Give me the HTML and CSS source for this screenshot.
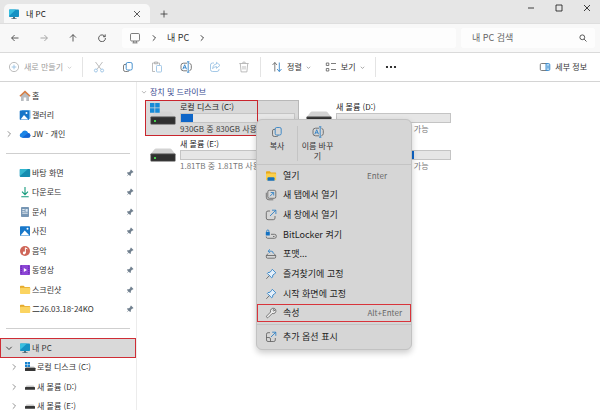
FILE: index.html
```html
<!DOCTYPE html>
<html lang="ko">
<head>
    <meta charset="UTF-8">
    <title>내 PC</title>
    <link rel="stylesheet" href="styles.css">
</head>
<body>
<!-- shared icons -->
<svg class="sprite" aria-hidden="true">
    <symbol id="i-pc" viewBox="0 0 12 12">
        <rect x="1" y="1.5" width="10" height="7.5" rx=".8" fill="#1592c4"/>
        <path d="M1 8V2.3q0-.8.8-.8H8z" fill="#38bfe0"/>
        <path d="M5 9h2v1.2h1.6v.8H3.400v-.8H5z" fill="#55707c"/>
    </symbol>
    <symbol id="i-right" viewBox="0 0 8 8"><path d="M2.800 1.300 5.500 4 2.800 6.700" class="line"/></symbol>
    <symbol id="i-down" viewBox="0 0 8 8"><path d="M1.300 2.800 4 5.500 6.700 2.800" class="line"/></symbol>
    <symbol id="i-x" viewBox="0 0 8 8"><path d="M1 1l6 6M7 1 1 7" class="line"/></symbol>
    <symbol id="i-copy" viewBox="0 0 12 12">
        <path d="M4 3.400H3q-1.500 0-1.500 1.500v3.800q0 1.800 1.800 1.800h2.400q1.300 0 1.500-1.200" class="line"/>
        <rect x="4.200" y="1.500" width="6" height="7.500" rx="1.500" class="line blue"/>
    </symbol>
    <symbol id="i-rename" viewBox="0 0 12 12">
        <path d="M7 2.200H3.500Q1 2.200 1 4.500v3Q1 9.800 3.500 9.800H7M9.400 2.300q1.900.4 1.900 2.200v3q0 1.800-1.900 2.200" class="line"/>
        <path d="M7 .8h2.400M7 11.200h2.400M8.200.8v10.400M2.800 8.300 4.700 3.700l1.900 4.600M3.400 6.800h2.600" class="line blue"/>
    </symbol>
    <symbol id="i-pin" viewBox="0 0 8 8">
        <path d="M5 .6 7.500 3 6.700 3.700 6.200 3.600 4.900 5l-.1 1.500-.6.6L2.700 5.700.8 7.300.7 7.200 2.300 5.300.9 3.900l.6-.6L3 3.200 4.400 1.900 4.300 1.300z" fill="#71808f"/>
    </symbol>
    <symbol id="i-pushpin" viewBox="0 0 12 12">
        <path d="M7.300 1.300 10.800 4.800 9.700 5.600 7.900 7 7.500 9.200 6.700 9.800 2.300 5.400 3 4.600 5.100 4.200 6.600 2.400z" fill="#e3effa" class="line blue filled"/>
        <path d="M4.300 7.700 1.300 10.800" class="line"/>
    </symbol>
    <symbol id="i-folder" viewBox="0 0 12 12">
        <path d="M1 2.500q0-.7.7-.7h3l1.100 1.100h4.600q.7 0 .7.7V6H1z" fill="#e5aa2d"/>
        <rect x="1" y="3.700" width="10.200" height="6.300" rx=".7" fill="#fbd461"/>
    </symbol>
    <symbol id="i-gallery" viewBox="0 0 12 12">
        <rect x="2.500" y="1" width="9" height="9" rx="1" fill="#72baf0"/>
        <rect x=".7" y="1.500" width="9.500" height="9.500" rx="1" fill="#1675c8"/>
        <path d="M1.500 10.600 5 6l4.300 4.600z" fill="#fff"/><circle cx="7.500" cy="4" r="1" fill="#fff"/>
    </symbol>
    <symbol id="i-photo" viewBox="0 0 12 12">
        <rect x="1" y="1.200" width="10" height="9.800" rx=".8" fill="#1878ca"/>
        <path d="M1.500 10.600 5.700 5.500l4.800 5.100z" fill="#fff"/><circle cx="8.500" cy="3.800" r="1" fill="#fff"/>
    </symbol>
    <symbol id="i-drive-s" viewBox="0 0 12 12">
        <path d="M2.500 4.500h7l1.300 1.800H1.200z" fill="#c9c9c9"/><rect x="1" y="6" width="10" height="2.800" rx=".5" fill="#363636"/>
    </symbol>
    <symbol id="i-drive-c" viewBox="0 0 12 12">
        <path d="M3.500 5.500h6.300l1.200 1.500H1.200z" fill="#c9c9c9"/><rect x="1" y="6.800" width="10.500" height="3.200" rx=".5" fill="#363636"/>
        <path d="M1 1h2.300v2.300H1zM3.700 1H6v2.300H3.700zM1 3.700h2.300V6H1zM3.700 3.700H6V6H3.700z" fill="#1682cf"/>
    </symbol>
    <symbol id="i-drive" viewBox="0 0 26 14">
        <path d="M6 .5h14q1 0 1.500.8L25.300 6v2H.7V6l3.800-4.700Q5 .5 6 .5z" fill="#d3d3d3"/>
        <rect x=".5" y="5.500" width="25" height="8" rx=".8" fill="#4b4b4b"/>
        <rect x="1.200" y="6.500" width="23.600" height="6.200" fill="#303030"/>
        <rect x="4" y="9" width="2" height="2" fill="#45d04d"/>
    </symbol>
</svg>

<div class="window">
    <header class="tabbar">
        <div class="tab">
            <svg class="icon"><use href="#i-pc"/></svg>
            <span class="tab-title">내 PC</span>
            <button class="icon-btn" aria-label="탭 닫기"><svg class="small"><use href="#i-x"/></svg></button>
        </div>
        <button class="icon-btn new-tab" aria-label="새 탭"><svg class="small" viewBox="0 0 8 8"><path d="M4 .5v7M.5 4h7" class="line"/></svg></button>
        <div class="window-controls">
            <button class="icon-btn" aria-label="최소화"><svg class="small" viewBox="0 0 8 8"><path d="M1 4h6" class="line"/></svg></button>
            <button class="icon-btn" aria-label="최대화"><svg class="small" viewBox="0 0 8 8"><path d="M1 1h6v6H1z" class="line"/></svg></button>
            <button class="icon-btn" aria-label="닫기"><svg class="small"><use href="#i-x"/></svg></button>
        </div>
    </header>

    <nav class="navbar">
        <div class="nav-buttons">
            <button class="icon-btn" aria-label="뒤로"><svg class="small" viewBox="0 0 8 8"><path d="M7.500 4H.7M3.600 1 .6 4l3 3" class="line"/></svg></button>
            <button class="icon-btn" aria-label="앞으로" disabled><svg class="small" viewBox="0 0 8 8"><path d="M.5 4h6.800M4.400 1l3 3-3 3" class="line"/></svg></button>
            <button class="icon-btn" aria-label="위로"><svg class="small" viewBox="0 0 8 8"><path d="M4 7.500V.7M1 3.600l3-3 3 3" class="line"/></svg></button>
            <button class="icon-btn" aria-label="새로 고침"><svg class="small" viewBox="0 0 8 8"><path d="M6.900 2.500A3.400 3.400 0 1 0 7.400 4M7.200.4v2.300H5" class="line"/></svg></button>
        </div>
        <div class="address">
            <svg class="icon" viewBox="0 0 12 12"><rect x="1.500" y="1.500" width="9" height="7.500" rx="1.200" class="line"/><path d="M4.700 9v1.700M7.300 9v1.700M3.500 10.900h5" class="line"/></svg>
            <svg class="small dark"><use href="#i-right"/></svg>
            <a href="#">내 PC</a>
            <svg class="small dark"><use href="#i-right"/></svg>
        </div>
        <label class="search">
            <input type="text" placeholder="내 PC 검색" aria-label="내 PC 검색">
            <svg class="small" viewBox="0 0 8 8"><circle cx="3.300" cy="3.300" r="2.400" class="line"/><path d="M5.100 5.100 7.500 7.500" class="line"/></svg>
        </label>
    </nav>

    <div class="toolbar">
        <button class="tool" disabled>
            <svg class="icon" viewBox="0 0 12 12"><circle cx="6" cy="6" r="4.600" class="line"/><path d="M6 3.700v4.600M3.700 6h4.600" class="line blue"/></svg>
            새로 만들기
            <svg class="caret"><use href="#i-down"/></svg>
        </button>
        <div class="tool-group">
            <button class="icon-btn" aria-label="잘라내기" disabled><svg class="icon" viewBox="0 0 12 12"><path d="M2.500 1 8 8.300M9.500 1 4 8.300" class="line"/><circle cx="2.900" cy="9.500" r="1.500" class="line blue"/><circle cx="9.100" cy="9.500" r="1.500" class="line blue"/></svg></button>
            <button class="icon-btn" aria-label="복사"><svg class="icon"><use href="#i-copy"/></svg></button>
            <button class="icon-btn" aria-label="붙여넣기" disabled><svg class="icon" viewBox="0 0 12 12"><path d="M4 10.500H1.500v-8.500h7v2M3.500 1h3v1.800h-3z" class="line"/><rect x="5.500" y="4.500" width="5" height="6.500" rx=".8" class="line blue"/></svg></button>
            <button class="icon-btn" aria-label="이름 바꾸기"><svg class="icon"><use href="#i-rename"/></svg></button>
            <button class="icon-btn" aria-label="공유" disabled><svg class="icon" viewBox="0 0 12 12"><path d="M5 2H3.500Q1.500 2 1.500 4v4.500q0 2 2 2H8q2 0 2-2V8" class="line blue"/><path d="M7.500 1.300 11 4.300 7.500 7.300V5.600Q5 5.500 3.700 7.700 4 3.300 7.500 3z" class="line blue"/></svg></button>
            <button class="icon-btn" aria-label="삭제" disabled><svg class="icon" viewBox="0 0 12 12"><path d="M1.300 2.500h9.400M4.500 2.300Q4.500 1 6 1t1.500 1.300M2.300 2.700l.8 8.200h5.800l.8-8.200M5 5v3.500M7 5v3.500" class="line"/></svg></button>
        </div>
        <div class="tool-group menus">
            <button class="tool">
                <svg class="icon" viewBox="0 0 12 12"><path d="M3.800 10.500v-9M1.500 4l2.300-2.500L6 4" class="line"/><path d="M8.300 1.500v9M6 8l2.300 2.500L10.500 8" class="line blue"/></svg>
                정렬
                <svg class="caret"><use href="#i-down"/></svg>
            </button>
            <button class="tool">
                <svg class="icon" viewBox="0 0 12 12"><path d="M1.300 2h2.500v2.500H1.300zM1.300 7.500h2.500V10H1.300zM6 2.500h5M6 8.500h5" class="line"/></svg>
                보기
                <svg class="caret"><use href="#i-down"/></svg>
            </button>
        </div>
        <button class="icon-btn more" aria-label="자세히"><svg class="icon" viewBox="0 0 12 12"><circle cx="2" cy="6" r="1.100"/><circle cx="6" cy="6" r="1.100"/><circle cx="10" cy="6" r="1.100"/></svg></button>
        <button class="tool details">
            <svg class="icon" viewBox="0 0 12 12"><path d="M7 2.500H2.500Q1.300 2.500 1.300 3.700v4.600q0 1.200 1.200 1.200H7" class="line"/><path d="M7 2.500h2.500q1.300 0 1.300 1.200v4.600q0 1.200-1.300 1.200H7z" fill="#b9dcf5" class="line blue filled"/><path d="M9 4.500v3" class="line blue"/></svg>
            세부 정보
        </button>
    </div>

    <div class="body">
        <aside class="sidebar">
            <div class="side-group home">
                <a href="#" class="side-item"><svg class="icon" viewBox="0 0 12 12"><path d="M2 5.500 6 2l4 3.500V11H7.300V7.500H4.700V11H2z" fill="#b9bdc1"/><path d="M.9 6.200 6 1.600l5.100 4.600" fill="none" stroke="#d57d43" stroke-width="1.500"/></svg>홈</a>
                <a href="#" class="side-item"><svg class="icon"><use href="#i-gallery"/></svg>갤러리</a>
                <a href="#" class="side-item"><svg class="small"><use href="#i-right"/></svg><svg class="icon" viewBox="0 0 12 12"><path d="M3.200 9.700Q.7 9.600.7 7.200q0-2 2-2.500Q3.700 2.500 6 2.500q2.500 0 3.200 2.600 2.200.2 2.200 2.300 0 2.200-2.300 2.300z" fill="#1b85e6"/><path d="M3 9.700 9.200 5.100q2.200.2 2.200 2.300 0 2.200-2.300 2.300z" fill="#1263d2"/></svg>JW - 개인</a>
            </div>
            <hr>
            <div class="side-group quick">
                <a href="#" class="side-item"><svg class="icon" viewBox="0 0 12 12"><rect x=".8" y="2" width="10.400" height="8" rx=".8" fill="#148caf"/><path d="M.8 9V2.800q0-.8.8-.8H9z" fill="#32b6ce"/></svg>바탕 화면<svg class="pin"><use href="#i-pin"/></svg></a>
                <a href="#" class="side-item"><svg class="icon" viewBox="0 0 12 12"><path d="M6 1v7.500M3 5.700l3 3 3-3M2.300 10.700h7.400" fill="none" stroke="#159b7c" stroke-width="1.100"/></svg>다운로드<svg class="pin"><use href="#i-pin"/></svg></a>
                <a href="#" class="side-item"><svg class="icon" viewBox="0 0 12 12"><rect x="2" y="1" width="8" height="10" rx=".8" fill="#7796b4"/><path d="M3.300 3.500h2.400M3.300 5.300h2.400M3.300 7.200h5.400" stroke="#fff" stroke-width=".8"/><path d="M6.500 3h2.200v2.800H6.500z" fill="#d8e7f4"/></svg>문서<svg class="pin"><use href="#i-pin"/></svg></a>
                <a href="#" class="side-item"><svg class="icon"><use href="#i-photo"/></svg>사진<svg class="pin"><use href="#i-pin"/></svg></a>
                <a href="#" class="side-item"><svg class="icon" viewBox="0 0 12 12"><circle cx="6" cy="6" r="5" fill="#cf6658"/><path d="M6.400 8V2.800L8.500 4" fill="none" stroke="#fff"/><circle cx="5.200" cy="8" r="1.400" fill="#fff"/></svg>음악<svg class="pin"><use href="#i-pin"/></svg></a>
                <a href="#" class="side-item"><svg class="icon" viewBox="0 0 12 12"><rect x="1" y="1" width="10" height="10" rx=".8" fill="#8c45d5"/><path d="M2.200 1.500v9M9.800 1.500v9" stroke="#5b20a0" stroke-dasharray="1.200 1"/><path d="M4.800 4v4L8 6z" fill="#fff"/></svg>동영상<svg class="pin"><use href="#i-pin"/></svg></a>
                <a href="#" class="side-item"><svg class="icon"><use href="#i-folder"/></svg>스크린샷<svg class="pin"><use href="#i-pin"/></svg></a>
                <a href="#" class="side-item"><svg class="icon"><use href="#i-folder"/></svg>二26.03.18-24KO<svg class="pin"><use href="#i-pin"/></svg></a>
            </div>
            <hr>
            <div class="side-group tree">
                <a href="#" class="side-item current"><svg class="small"><use href="#i-down"/></svg><svg class="icon"><use href="#i-pc"/></svg>내 PC</a>
                <a href="#" class="side-item child"><svg class="small"><use href="#i-right"/></svg><svg class="icon"><use href="#i-drive-c"/></svg>로컬 디스크 (C:)</a>
                <a href="#" class="side-item child"><svg class="small"><use href="#i-right"/></svg><svg class="icon"><use href="#i-drive-s"/></svg>새 볼륨 (D:)</a>
                <a href="#" class="side-item child"><svg class="small"><use href="#i-right"/></svg><svg class="icon"><use href="#i-drive-s"/></svg>새 볼륨 (E:)</a>
            </div>
        </aside>

        <main class="content">
            <h2><svg class="small"><use href="#i-down"/></svg>장치 및 드라이브</h2>
            <div class="drives">
                <div class="drive selected">
                    <svg class="drive-icon" viewBox="0 0 26 24"><use href="#i-drive" y="10" width="26" height="14"/><path d="M0 2h4.500v4.500H0zM5.200 2h4.500v4.500H5.200zM0 7.200h4.500v4.500H0zM5.200 7.200h4.500v4.500H5.200z" fill="#168bd8"/></svg>
                    <div class="drive-info">
                        <span>로컬 디스크 (C:)</span>
                        <div class="bar"><div class="used" style="width: 11%"></div></div>
                        <span class="space">930GB 중 830GB 사용 가능</span>
                    </div>
                    <div class="mark"></div>
                </div>
                <div class="drive">
                    <svg class="drive-icon" viewBox="0 0 26 24"><use href="#i-drive" y="10" width="26" height="14"/></svg>
                    <div class="drive-info">
                        <span>새 볼륨 (D:)</span>
                        <div class="bar"></div>
                        <span class="space">1.81TB 중 1.8TB 사용 가능</span>
                    </div>
                </div>
                <div class="drive">
                    <svg class="drive-icon" viewBox="0 0 26 24"><use href="#i-drive" y="10" width="26" height="14"/></svg>
                    <div class="drive-info">
                        <span>새 볼륨 (E:)</span>
                        <div class="bar"></div>
                        <span class="space">1.81TB 중 1.81TB 사용 가능</span>
                    </div>
                </div>
                <div class="drive">
                    <svg class="drive-icon" viewBox="0 0 26 24"><use href="#i-drive" y="10" width="26" height="14"/></svg>
                    <div class="drive-info">
                        <span>새 볼륨 (F:)</span>
                        <div class="bar"><div class="used" style="width: 68%"></div></div>
                        <span class="space">1.81TB 중 0.6TB 사용 가능</span>
                    </div>
                </div>
            </div>
        </main>
    </div>
</div>

<!-- context menu for the selected drive -->
<div class="context-menu">
    <div class="commands">
        <button><svg class="icon"><use href="#i-copy"/></svg>복사</button>
        <button><svg class="icon"><use href="#i-rename"/></svg>이름 바꾸기</button>
    </div>
    <div class="menu-list">
        <button class="menu-item"><svg class="icon" viewBox="0 0 12 12"><path d="M1 2q0-.8.8-.8h3l1.100 1.200h4.500q.7 0 .7.7V10H1z" fill="#e8a91c"/><rect x="1" y="3.500" width="10" height="6.800" rx=".7" fill="#fbd04c"/><path d="M2.500 10.800V8.300q0-1 1-1h5q1 0 1 1v2.500z" fill="#1471c1"/></svg>열기<kbd>Enter</kbd></button>
        <button class="menu-item"><svg class="icon" viewBox="0 0 12 12"><rect x="2.800" y="1.300" width="8" height="8" rx="1.500" class="line"/><path d="M1.300 3.700v4.500q0 2.600 2.600 2.600h4.400" class="line"/><path d="M5 7.200l3.500-3.500M5.700 3.500h3v3" class="line blue"/></svg>새 탭에서 열기</button>
        <button class="menu-item"><svg class="icon" viewBox="0 0 12 12"><path d="M5 2H3Q1.300 2 1.300 3.700V9q0 1.700 1.700 1.700h5.300Q10 10.700 10 9V7" class="line"/><path d="M5 7l5.700-5.700M7 1.200h3.900V5" class="line blue"/></svg>새 창에서 열기</button>
        <button class="menu-item"><svg class="icon" viewBox="0 0 12 12"><path d="M6 5.300h3.500q1.800 0 1.800 1.800v.4q0 1.800-1.800 1.800H2.700q-1.500 0-1.500-1.800M8 7.500h1.500" class="line"/><rect x=".8" y="3" width="4" height="3.500" rx=".5" fill="#1371c2"/><path d="M1.700 3V1.900q0-.9 1.100-.9T3.900 1.900V3" class="line blue"/></svg>BitLocker 켜기</button>
        <button class="menu-item"><svg class="icon" viewBox="0 0 12 12"><path d="M3 5.500 1.300 7.700v1.200q0 1.300 1.300 1.300h6.800q1.300 0 1.300-1.300V7.700L9 5.500M1.300 7.500h9.400" class="line"/><path d="M3.300 3.200h3q2 0 2 2.300M5 1.300 3.100 3.200 5 5.100" class="line blue"/></svg>포맷...</button>
        <button class="menu-item"><svg class="icon"><use href="#i-pushpin"/></svg>즐겨찾기에 고정</button>
        <button class="menu-item"><svg class="icon"><use href="#i-pushpin"/></svg>시작 화면에 고정</button>
        <button class="menu-item marked"><svg class="icon" viewBox="0 0 12 12"><path d="M9.700 1.500 7.900 3.300l.9.900 1.800-1.800q.9 2-.4 3.400-1.200 1.200-3 .7L3.300 10.400q-.8.7-1.500 0t0-1.500L5.600 5Q5.100 3.200 6.300 2q1.400-1.300 3.400-.5z" fill="#eee" class="line filled"/></svg>속성<kbd>Alt+Enter</kbd></button>
    </div>
    <div class="menu-more">
        <button class="menu-item"><svg class="icon" viewBox="0 0 12 12"><path d="M5 1.700H3q-1.500 0-1.500 1.500V9q0 1.500 1.500 1.500h5.800q1.500 0 1.500-1.500V7M1.500 6.500h2.500q1.500 0 1.500 1.500v2.500" class="line"/><path d="M6 6l4.700-4.700M7.200 1.200h3.600v3.600" class="line blue"/></svg>추가 옵션 표시</button>
    </div>
</div>
</body>
</html>
```
FILE: styles.css
```css
* {
    box-sizing: border-box;
}
html, body {
    height: 100%;
}
body {
    margin: 0;
    overflow: hidden;
    font-family: "Noto Sans CJK KR", "Noto Sans", sans-serif;
    font-size: 8px;
    line-height: 12px;
    color: #333;
    background: #fff;
}
button, input {
    font: inherit;
    color: inherit;
    border: 0;
    padding: 0;
    background: none;
}
a {
    color: inherit;
    text-decoration: none;
}
svg {
    flex: none;
    display: block;
}
.sprite {
    position: absolute;
    width: 0;
    height: 0;
}
.line {
    stroke: currentColor;
    stroke-width: 0.8;
}
.line:not(.filled) {
    fill: none;
}
.line.blue {
    stroke: #2079c4;
}
.icon {
    width: 12px;
    height: 12px;
    color: #5c5c5c;
}
.small {
    width: 8px;
    height: 8px;
}
.caret {
    width: 5px;
    height: 5px;
    color: #555;
}
.dark {
    color: #111;
}
.icon-btn {
    display: flex;
    align-items: center;
    justify-content: center;
}
.window {
    display: flex;
    flex-direction: column;
    height: 100%;
}

/* tabs */
.tabbar {
    display: flex;
    height: 23px;
    padding: 4px 0 0 4px;
    background: #e6e6e6;
}
.tab {
    display: flex;
    align-items: center;
    gap: 6px;
    width: 146px;
    padding: 0 9px 0 4px;
    background: #f8f8f8;
    border-radius: 5px 5px 0 0;
}
.tab-title {
    flex: 1;
    color: #111;
}
.new-tab {
    width: 28px;
}
.window-controls {
    display: flex;
    gap: 20px;
    margin-left: auto;
    padding-right: 9px;
    height: 8px;
    color: #111;
}

/* address row */
.navbar {
    display: flex;
    align-items: center;
    height: 30px;
    background: #f8f8f8;
    border-top: 1px solid #dedede;
    border-bottom: 1px solid #dadada;
    padding-right: 5px;
    gap: 5px;
    font-size: 9px;
}
.nav-buttons {
    display: flex;
    gap: 21px;
    width: 117px;
    padding-left: 11px;
}
.icon-btn:disabled, .tool:disabled {
    opacity: 0.5;
}
.address {
    flex: 1;
    display: flex;
    align-items: center;
    gap: 9px;
    height: 20px;
    padding-left: 7px;
    background: #fdfdfd;
    border-radius: 3px;
    color: #333;
}
.search {
    display: flex;
    align-items: center;
    width: 134px;
    height: 20px;
    padding: 0 8px 0 11px;
    background: #fdfdfd;
    border-radius: 3px;
}
.search input {
    flex: 1;
    min-width: 0;
    outline: 0;
}
.search input::placeholder {
    color: #666;
}

/* commands */
.toolbar {
    display: flex;
    align-items: center;
    height: 29px;
    padding: 0 13px 0 8px;
    border-bottom: 1px solid #d4d4d4;
}
.tool {
    display: flex;
    align-items: center;
    gap: 4px;
}
.tool-group {
    display: flex;
    gap: 17px;
    padding: 4px 10px;
    margin-left: 10px;
    border-left: 1px solid #e4e4e4;
}
.tool-group.menus {
    gap: 14px;
    margin-left: 0;
    border-right: 1px solid #e4e4e4;
}
.more {
    margin-left: 9px;
}
.more .icon {
    color: #111;
}
.details {
    margin-left: auto;
}

/* folders */
.body {
    flex: 1;
    display: flex;
    min-height: 0;
}
.sidebar {
    width: 137px;
    padding-top: 4px;
    overflow: hidden;
    border-right: 1px solid #ececec;
}
.sidebar hr {
    margin: 9px 6px;
    border: 0;
    border-top: 1px solid #cfcfcf;
}
.side-group {
    display: grid;
    grid-auto-rows: 1fr;
}
.home {
    height: 58px;
}
.quick {
    height: 156px;
}
.tree {
    height: 78px;
}
.side-item {
    display: flex;
    align-items: center;
    gap: 1px;
    padding: 0 2px 0 19px;
    white-space: nowrap;
}
.side-item .small {
    color: #777;
    margin-left: -14px;
    margin-right: 5px;
}
.side-item.child {
    padding-left: 24px;
}
.side-item.current {
    background: #d9d9d9;
    outline: 1px solid #cf2d35;
    outline-offset: -1px;
}
.side-item.current .small {
    color: #222;
}
.pin {
    width: 8px;
    height: 8px;
    margin-left: auto;
}

/* drives */
.content {
    flex: 1;
    padding: 4px 0 0 4px;
}
.content h2 {
    display: flex;
    align-items: center;
    gap: 3px;
    margin: 0;
    font-size: 8px;
    font-weight: normal;
    color: #35488f;
}
.content h2 .small {
    width: 6px;
    height: 6px;
    color: #888;
}
.drives {
    display: grid;
    grid-template-columns: 154px 154px;
    gap: 1px 2px;
    padding: 2px 0 0 4px;
}
.drive {
    position: relative;
    display: flex;
    gap: 4px;
    height: 36px;
    padding: 0 3px 0 4px;
    border: 1px solid transparent;
}
.drive.selected {
    background: #d9d9d9;
    border-color: #b8b8b8;
}
.drive-icon {
    width: 26px;
    height: 24px;
}
.drive-info {
    flex: 1;
    color: #222;
    white-space: nowrap;
}
.drive-info span {
    display: block;
}
.drive-info .space {
    color: #777;
}
.selected .drive-info .space {
    color: #444;
}
.bar {
    height: 10px;
    background: #e6e6e6;
    border: 1px solid #c4c4c4;
}
.used {
    height: 100%;
    background: #0f66c8;
}
.mark {
    position: absolute;
    top: -1px;
    bottom: -1px;
    left: -1px;
    width: 113px;
    border: 1px solid #c9252d;
}

/* context menu */
.context-menu {
    position: absolute;
    left: 256px;
    top: 119px;
    width: 156px;
    background: #d6d6d6;
    border: 1px solid #c2c2c2;
    border-radius: 6px;
    box-shadow: 0 3px 6px rgba(0, 0, 0, 0.2);
}
.commands {
    display: flex;
    align-items: flex-start;
    height: 45px;
    padding: 6px 0;
    border-bottom: 1px solid #c4c4c4;
}
.commands button {
    display: flex;
    flex-direction: column;
    align-items: center;
    gap: 3px;
    width: 40px;
    height: 35px;
    padding: 0 2px;
    line-height: 10px;
}
.commands button + button {
    border-left: 1px solid #c4c4c4;
}
.menu-list {
    display: grid;
    grid-auto-rows: 1fr;
    height: 159px;
    padding: 1px 0;
}
.menu-item {
    display: flex;
    align-items: center;
    gap: 6px;
    width: 100%;
    padding: 0 24px 0 8px;
    font-size: 9px;
    color: #222;
    text-align: left;
}
.menu-item kbd {
    margin-left: auto;
    font-family: inherit;
    font-size: 8px;
    color: #666;
}
.menu-item.marked {
    padding-right: 9px;
    margin: 1px 0;
    outline: 1px solid #d8343b;
    outline-offset: -1px;
}
.menu-more {
    border-top: 1px solid #c4c4c4;
    padding: 6px 0;
}
```
